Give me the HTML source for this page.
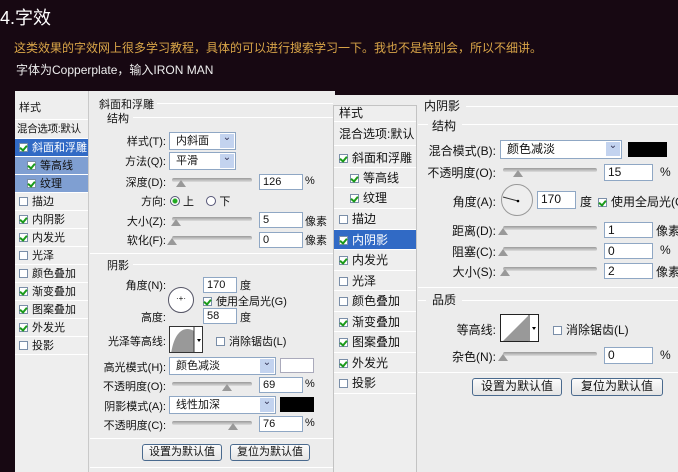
<!DOCTYPE html><html><head><meta charset="utf-8"><style>
*{margin:0;padding:0;box-sizing:border-box}
body{width:678px;height:472px;background:#170812;position:relative;overflow:hidden;font-family:"Liberation Sans","Noto Sans CJK SC",sans-serif;font-size:11px;color:#111}
.a{position:absolute;white-space:nowrap}
.dlg{position:absolute;background:#ececec}
.row{position:absolute;left:0;height:18px;line-height:18px;padding-left:4px;border-bottom:1px solid #fff;width:100%;white-space:nowrap;overflow:hidden}
.sel{background:#316ac5;color:#fff}
.sub{background:#7f9fd2}
.cb{display:inline-block;width:9px;height:9px;border:1px solid #7a8ea8;background:#fff;vertical-align:-1px;margin-right:4px;position:relative}
.cb.k::after{content:"";position:absolute;left:1px;top:0px;width:3px;height:5px;border:solid #1a9a1a;border-width:0 2px 2px 0;transform:rotate(40deg)}
.inp{position:absolute;background:#fff;border:1px solid #8fa7c4;height:16px;line-height:14px;padding-left:3px}
.selb{position:absolute;background:#fff;border:1px solid #8fa7c4;height:18px;line-height:16px;padding-left:6px}
.selb::after{content:"⌄";position:absolute;right:1px;top:1px;width:14px;height:14px;background:#c3d3ef;color:#335;font-size:10px;line-height:8px;text-align:center}
.sl{position:absolute;height:4px;background:linear-gradient(#999,#ddd);border-radius:2px}
.th{position:absolute;width:0;height:0;border-left:5px solid transparent;border-right:5px solid transparent;border-bottom:7px solid #999}
.ln{position:absolute;height:1px;background:#c5c5c5;border-bottom:1px solid #fff}
.btn{position:absolute;height:17px;border:1px solid #4a6a8e;border-radius:3px;background:linear-gradient(#fbfbfb,#e4e4e4);text-align:center;line-height:15px}
.lab{position:absolute;text-align:right;white-space:nowrap}
</style></head><body>
<div class="a" style="left:0;top:4px;color:#fff;font-size:18px">4.字效</div>
<div class="a" style="left:14px;top:39px;color:#d9a548;font-size:12px">这类效果的字效网上很多学习教程，具体的可以进行搜索学习一下。我也不是特别会，所以不细讲。</div>
<div class="a" style="left:16px;top:61px;color:#eee;font-size:12px">字体为Copperplate，输入IRON MAN</div>

<!-- left dialog -->
<div class="dlg" style="left:15px;top:91px;width:320px;height:381px">
 <div style="position:absolute;left:0;top:0;width:74px;height:381px;border-right:1px solid #c9c9c9;background:#eee">
  <div class="row" style="top:7px;height:22px;line-height:20px">样式</div>
  <div class="row" style="top:29px;height:19px;padding-left:2px;font-size:10.5px;letter-spacing:-0.3px">混合选项:默认</div>
  <div class="row sel" style="top:48px"><span class="cb k"></span>斜面和浮雕</div>
  <div class="row sub" style="top:66px;padding-left:12px"><span class="cb k"></span>等高线</div>
  <div class="row sub" style="top:84px;padding-left:12px"><span class="cb k"></span>纹理</div>
  <div class="row" style="top:102px"><span class="cb"></span>描边</div>
  <div class="row" style="top:120px"><span class="cb k"></span>内阴影</div>
  <div class="row" style="top:138px"><span class="cb k"></span>内发光</div>
  <div class="row" style="top:156px"><span class="cb"></span>光泽</div>
  <div class="row" style="top:174px"><span class="cb"></span>颜色叠加</div>
  <div class="row" style="top:192px"><span class="cb k"></span>渐变叠加</div>
  <div class="row" style="top:210px"><span class="cb k"></span>图案叠加</div>
  <div class="row" style="top:228px"><span class="cb k"></span>外发光</div>
  <div class="row" style="top:246px"><span class="cb"></span>投影</div>
 </div>
</div>
<div class="a" style="left:99px;top:96px">斜面和浮雕</div><div class="ln" style="left:157px;top:103px;width:176px"></div>
<div class="a" style="left:107px;top:110px">结构</div><div class="ln" style="left:133px;top:117px;width:200px"></div>
<div class="lab" style="left:120px;width:46px;top:133px">样式(T):</div><div class="selb" style="left:169px;top:132px;width:67px">内斜面</div>
<div class="lab" style="left:120px;width:46px;top:153px">方法(Q):</div><div class="selb" style="left:169px;top:152px;width:67px">平滑</div>
<div class="lab" style="left:120px;width:46px;top:174px">深度(D):</div><div class="sl" style="left:172px;top:178px;width:80px"></div><div class="th" style="left:176px;top:180px"></div><div class="inp" style="left:259px;top:174px;width:44px">126</div><div class="a" style="left:305px;top:175px">%</div>
<div class="lab" style="left:120px;width:46px;top:193px">方向:</div><div class="a" style="left:170px;top:193px"><span style="display:inline-block;width:10px;height:10px;border:1px solid #557;border-radius:50%;vertical-align:-1px;background:radial-gradient(#2a2 2px,#fff 3px)"></span> 上 &nbsp;&nbsp;&nbsp;<span style="display:inline-block;width:10px;height:10px;border:1px solid #557;border-radius:50%;vertical-align:-1px;background:#fff"></span> 下</div>
<div class="lab" style="left:120px;width:46px;top:213px">大小(Z):</div><div class="sl" style="left:172px;top:217px;width:80px"></div><div class="th" style="left:171px;top:219px"></div><div class="inp" style="left:259px;top:212px;width:44px">5</div><div class="a" style="left:305px;top:213px">像素</div>
<div class="lab" style="left:120px;width:46px;top:232px">软化(F):</div><div class="sl" style="left:172px;top:236px;width:80px"></div><div class="th" style="left:167px;top:238px"></div><div class="inp" style="left:259px;top:232px;width:44px">0</div><div class="a" style="left:305px;top:232px">像素</div>
<div class="ln" style="left:90px;top:253px;width:243px"></div>
<div class="a" style="left:107px;top:257px">阴影</div><div class="ln" style="left:133px;top:264px;width:200px"></div>
<div class="lab" style="left:110px;width:56px;top:277px">角度(N):</div>
<div class="a" style="left:168px;top:287px;width:26px;height:26px;border:1px solid #556;border-radius:50%;background:#fff;text-align:center;line-height:22px;font-size:8px">·+·</div>
<div class="inp" style="left:203px;top:277px;width:34px">170</div><div class="a" style="left:240px;top:277px">度</div>
<div class="a" style="left:203px;top:293px"><span class="cb k"></span>使用全局光(G)</div>
<div class="lab" style="left:110px;width:56px;top:309px">高度:</div><div class="inp" style="left:203px;top:308px;width:34px">58</div><div class="a" style="left:240px;top:309px">度</div>
<div class="lab" style="left:100px;width:66px;top:333px">光泽等高线:</div>
<div class="a" style="left:169px;top:326px;width:34px;height:27px;border:1px solid #333;background:#fff;overflow:hidden"><svg width="34" height="27"><path d="M1 27 C4 5 14 -2 24 4 L24 27Z" fill="#999"/><line x1="24" y1="0" x2="24" y2="27" stroke="#333"/><path d="M27 12h4l-2 3z" fill="#000"/></svg></div>
<div class="a" style="left:216px;top:333px"><span class="cb"></span>消除锯齿(L)</div>
<div class="lab" style="left:100px;width:66px;top:359px">高光模式(H):</div><div class="selb" style="left:169px;top:357px;width:107px">颜色减淡</div><div class="a" style="left:280px;top:358px;width:34px;height:15px;background:#fff;border:1px solid #aab"></div>
<div class="lab" style="left:100px;width:66px;top:378px">不透明度(O):</div><div class="sl" style="left:172px;top:382px;width:80px"></div><div class="th" style="left:222px;top:384px"></div><div class="inp" style="left:259px;top:377px;width:44px">69</div><div class="a" style="left:305px;top:378px">%</div>
<div class="lab" style="left:100px;width:66px;top:398px">阴影模式(A):</div><div class="selb" style="left:169px;top:396px;width:107px">线性加深</div><div class="a" style="left:280px;top:397px;width:34px;height:15px;background:#000"></div>
<div class="lab" style="left:100px;width:66px;top:417px">不透明度(C):</div><div class="sl" style="left:172px;top:421px;width:80px"></div><div class="th" style="left:228px;top:423px"></div><div class="inp" style="left:259px;top:416px;width:44px">76</div><div class="a" style="left:305px;top:417px">%</div>
<div class="ln" style="left:90px;top:438px;width:243px"></div>
<div class="btn" style="left:142px;top:444px;width:80px">设置为默认值</div><div class="btn" style="left:230px;top:444px;width:80px">复位为默认值</div>
<div class="ln" style="left:90px;top:467px;width:243px"></div>

<!-- right dialog -->
<div class="dlg" style="left:333px;top:95px;width:345px;height:377px;font-size:12px">
 <div style="position:absolute;left:0;top:10px;width:84px;height:367px;border-right:1px solid #c3c3c3;border-left:1px solid #c3c3c3;border-top:1px solid #c3c3c3;background:#eee">
  <div class="row" style="top:0;height:16px;line-height:14px;padding-left:5px">样式</div>
  <div class="row" style="top:17px;height:23px;line-height:22px;padding-left:5px">混合选项:默认</div>
  <div class="row" style="top:42px;height:20px;line-height:20px;padding-left:5px"><span class="cb k"></span>斜面和浮雕</div>
  <div class="row" style="top:62px;height:20px;line-height:20px;padding-left:16px"><span class="cb k"></span>等高线</div>
  <div class="row" style="top:82px;height:21px;line-height:20px;padding-left:16px"><span class="cb k"></span>纹理</div>
  <div class="row" style="top:103px;height:21px;line-height:20px;padding-left:5px"><span class="cb"></span>描边</div>
  <div class="row sel" style="top:124px;height:20px;line-height:20px;padding-left:5px"><span class="cb k"></span>内阴影</div>
  <div class="row" style="top:144px;height:21px;line-height:20px;padding-left:5px"><span class="cb k"></span>内发光</div>
  <div class="row" style="top:165px;height:20px;line-height:20px;padding-left:5px"><span class="cb"></span>光泽</div>
  <div class="row" style="top:185px;height:21px;line-height:20px;padding-left:5px"><span class="cb"></span>颜色叠加</div>
  <div class="row" style="top:206px;height:20px;line-height:20px;padding-left:5px"><span class="cb k"></span>渐变叠加</div>
  <div class="row" style="top:226px;height:21px;line-height:20px;padding-left:5px"><span class="cb k"></span>图案叠加</div>
  <div class="row" style="top:247px;height:20px;line-height:20px;padding-left:5px"><span class="cb k"></span>外发光</div>
  <div class="row" style="top:267px;height:21px;line-height:20px;padding-left:5px"><span class="cb"></span>投影</div>
 </div>
</div>
<div style="font-size:12px">
<div class="a" style="left:424px;top:97px">内阴影</div><div class="ln" style="left:466px;top:106px;width:212px"></div>
<div class="a" style="left:432px;top:117px">结构</div><div class="ln" style="left:418px;top:124px;width:10px"></div><div class="ln" style="left:462px;top:124px;width:216px"></div>
<div class="lab" style="left:420px;width:76px;top:142px">混合模式(B):</div><div class="selb" style="left:500px;top:140px;width:122px;height:19px">颜色减淡</div><div class="a" style="left:628px;top:142px;width:39px;height:15px;background:#000"></div>
<div class="lab" style="left:420px;width:76px;top:164px">不透明度(O):</div><div class="sl" style="left:503px;top:168px;width:94px"></div><div class="th" style="left:513px;top:170px"></div><div class="inp" style="left:604px;top:164px;width:49px;height:17px">15</div><div class="a" style="left:660px;top:165px">%</div>
<div class="lab" style="left:420px;width:76px;top:193px">角度(A):</div>
<div class="a" style="left:501px;top:184px;width:32px;height:32px;border:1px solid #999;border-radius:50%;background:#eee"><svg width="30" height="30"><line x1="1" y1="12" x2="16" y2="16" stroke="#333"/><circle cx="16" cy="16" r="1.3" fill="#000"/></svg></div>
<div class="inp" style="left:537px;top:191px;width:39px;height:18px">170</div><div class="a" style="left:580px;top:193px">度</div>
<div class="a" style="left:598px;top:193px"><span class="cb k"></span>使用全局光(G)</div>
<div class="lab" style="left:420px;width:76px;top:222px">距离(D):</div><div class="sl" style="left:503px;top:226px;width:94px"></div><div class="th" style="left:498px;top:228px"></div><div class="inp" style="left:604px;top:222px;width:49px;height:16px">1</div><div class="a" style="left:656px;top:222px">像素</div>
<div class="lab" style="left:420px;width:76px;top:243px">阻塞(C):</div><div class="sl" style="left:503px;top:247px;width:94px"></div><div class="th" style="left:498px;top:249px"></div><div class="inp" style="left:604px;top:243px;width:49px;height:16px">0</div><div class="a" style="left:660px;top:243px">%</div>
<div class="lab" style="left:420px;width:76px;top:263px">大小(S):</div><div class="sl" style="left:503px;top:267px;width:94px"></div><div class="th" style="left:500px;top:269px"></div><div class="inp" style="left:604px;top:263px;width:49px;height:16px">2</div><div class="a" style="left:656px;top:263px">像素</div>
<div class="ln" style="left:418px;top:287px;width:260px"></div>
<div class="a" style="left:432px;top:291px">品质</div><div class="ln" style="left:418px;top:300px;width:8px"></div><div class="ln" style="left:462px;top:300px;width:216px"></div>
<div class="lab" style="left:420px;width:76px;top:321px">等高线:</div>
<div class="a" style="left:500px;top:314px;width:39px;height:28px;border:1px solid #222;background:#fff"><svg width="38" height="27"><path d="M2 26 L27 1 L27 26Z" fill="#999"/><line x1="28" y1="0" x2="28" y2="27" stroke="#333"/><path d="M31 12h4l-2 3z" fill="#000"/></svg></div>
<div class="a" style="left:553px;top:321px"><span class="cb"></span>消除锯齿(L)</div>
<div class="lab" style="left:420px;width:76px;top:348px">杂色(N):</div><div class="sl" style="left:503px;top:352px;width:94px"></div><div class="th" style="left:498px;top:354px"></div><div class="inp" style="left:604px;top:347px;width:49px;height:17px">0</div><div class="a" style="left:660px;top:348px">%</div>
<div class="ln" style="left:418px;top:372px;width:260px"></div>
<div class="btn" style="left:472px;top:378px;width:90px;height:18px">设置为默认值</div><div class="btn" style="left:571px;top:378px;width:92px;height:18px">复位为默认值</div>
</div>
</body></html>
